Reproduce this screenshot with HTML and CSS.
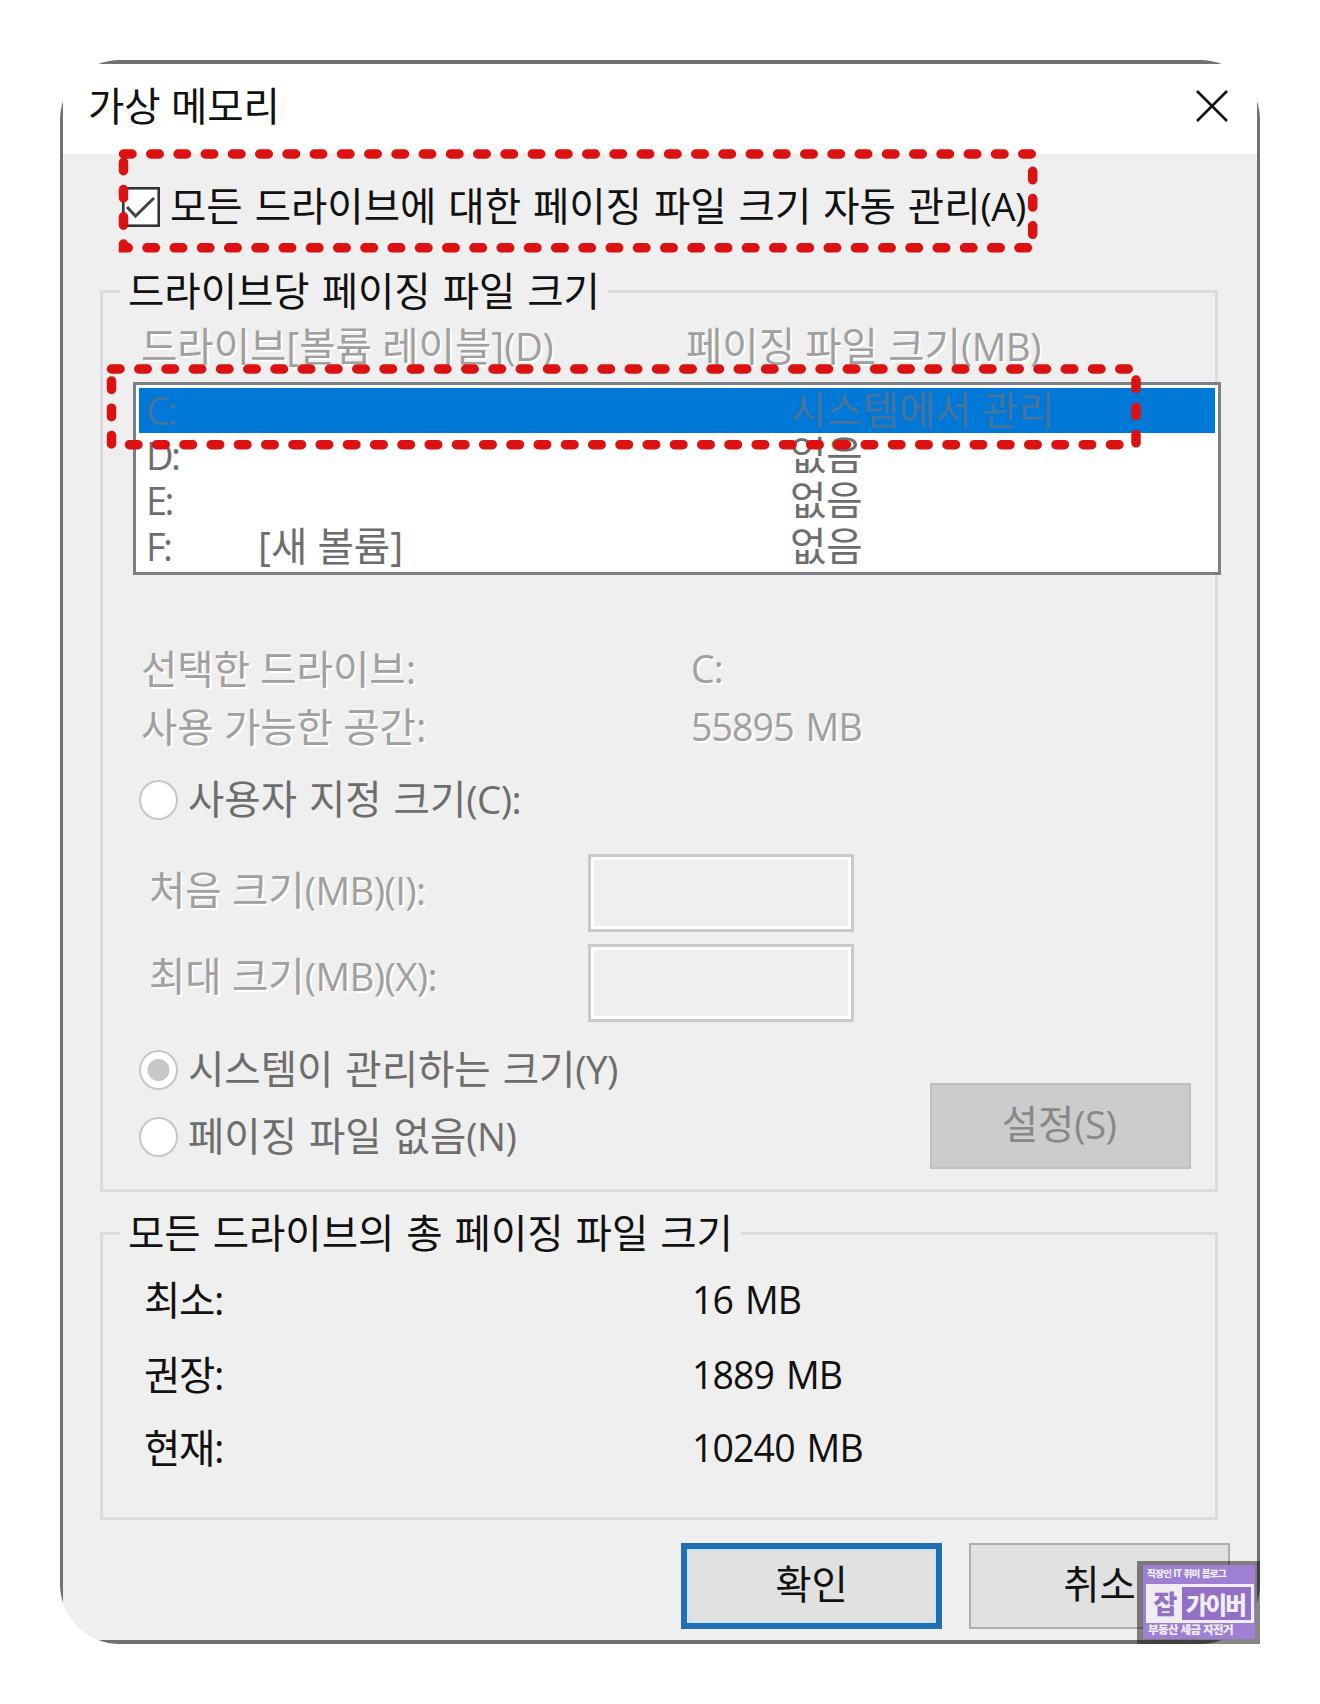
FILE: index.html
```html
<!DOCTYPE html>
<html lang="ko">
<head>
<meta charset="utf-8">
<title>가상 메모리</title>
<link rel="stylesheet" href="styles.css">
</head>
<body>
<div class="stage">
  <div class="clip">
    <section class="dialog">
      <header class="titlebar">
        <h1 class="title">가상 메모리</h1>
        <svg class="close" width="34" height="34" viewBox="0 0 34 34"><path d="M2 2 32 32M32 2 2 32" stroke="#111" stroke-width="2.6" fill="none"/></svg>
      </header>

      <label class="auto">
        <svg width="38" height="40" viewBox="0 0 38 40"><rect x="1.3" y="1.3" width="35.4" height="37.4" fill="#fff" stroke="#333" stroke-width="2.6"/><path d="M5 20 13.5 29 32 11" fill="none" stroke="#444" stroke-width="3"/></svg>
        <span class="text">모든 드라이브에 대한 페이징 파일 크기 자동 관리<span class="lat">(A)</span></span>
      </label>

      <div class="group drives">
        <div class="legend">드라이브당 페이징 파일 크기</div>
        <div class="cols head off"><span>드라이브[볼륨 레이블]<span class="lat">(D)</span></span><span>페이징 파일 크기<span class="lat">(MB)</span></span></div>
        <div class="list">
          <div class="item selected"><span class="drive">C:</span><span></span><span>시스템에서 관리</span></div>
          <div class="item"><span class="drive">D:</span><span></span><span>없음</span></div>
          <div class="item"><span class="drive">E:</span><span></span><span>없음</span></div>
          <div class="item"><span class="drive">F:</span><span>[새 볼륨]</span><span>없음</span></div>
        </div>
        <div class="cols chosen off"><span>선택한 드라이브:</span><span class="val">C:</span></div>
        <div class="cols space off"><span>사용 가능한 공간:</span><span class="val">55895 MB</span></div>
        <div class="radio custom"><i class="dot"></i><span class="text">사용자 지정 크기<span class="lat">(C):</span></span></div>
        <div class="field first off"><span>처음 크기<span class="lat">(MB)(I):</span></span><div class="input"></div></div>
        <div class="field second off"><span>최대 크기<span class="lat">(MB)(X):</span></span><div class="input"></div></div>
        <div class="bottom">
          <div class="radios">
            <div class="radio"><i class="dot on"></i><span class="text">시스템이 관리하는 크기<span class="lat">(Y)</span></span></div>
            <div class="radio"><i class="dot"></i><span class="text">페이징 파일 없음<span class="lat">(N)</span></span></div>
          </div>
          <div class="btn disabled">설정<span class="lat">(S)</span></div>
        </div>
      </div>

      <div class="group totals">
        <div class="legend">모든 드라이브의 총 페이징 파일 크기</div>
        <div class="cols min"><span class="name">최소:</span><span class="val">16 MB</span></div>
        <div class="cols rec"><span class="name">권장:</span><span class="val">1889 MB</span></div>
        <div class="cols cur"><span class="name">현재:</span><span class="val">10240 MB</span></div>
      </div>

      <footer class="actions">
        <div class="btn primary">확인</div>
        <div class="btn">취소</div>
      </footer>
    </section>
  </div>

  <svg class="marks" width="1200" height="1584" viewBox="60 60 1200 1584">
    <path d="M123.5 154H1032.7V247.8H123.5Z"/>
    <path d="M111.5 369H1136V444.7H111.5Z"/>
  </svg>

  <aside class="badge">
    <div class="badge-in">
      <div class="b-top">직장인 IT 취미 블로그</div>
      <div class="b-mid"><b>잡</b><span><em>가이버</em></span></div>
      <div class="b-bot">부동산 세금 자전거</div>
    </div>
  </aside>
</div>
</body>
</html>
```
FILE: styles.css
```css
* { box-sizing: border-box; }
body {
  margin: 0;
  background: #fff;
  color: #111;
  font: 39.5px/38px "Open Sans", "Noto Sans CJK KR", sans-serif;
  white-space: nowrap;
}
.stage { position: relative; width: 1200px; height: 1584px; margin: 60px; }
.clip { height: 1584px; border-radius: 60px; overflow: hidden; }
.dialog {
  height: 1584px;
  background: #efefef;
  border: 3px solid #717171;
  border-top-width: 4px;
  border-bottom-width: 4px;
}
.titlebar {
  display: flex;
  justify-content: space-between;
  height: 90px;
  padding: 23px 28px 0 25px;
  background: #fff;
}
.title { margin: 0; font: inherit; }
.close { margin-top: 2px; }
.auto { display: flex; height: 40px; margin: 33px 0 0 59px; gap: 10px; }
.text, .legend { word-spacing: 1.7px; }
.lat { font-size: 38.5px; letter-spacing: -.6px; }
.drive { font-size: 38px; letter-spacing: -2.6px; }
.val { font-size: 37.5px; letter-spacing: -.9px; word-spacing: 3px; }
.name { letter-spacing: -1.4px; }
.off { color: #a0a0a0; text-shadow: 2px 2px 0 #fff; }

.group { width: 1118px; margin-left: 37px; border: 3px solid #dcdcdc; }
.legend {
  width: max-content;
  height: 40px;
  margin: -21px 0 0 17px;
  padding: 0 8px;
  background: #efefef;
}
.drives { height: 902px; margin-top: 63px; }
.cols { display: grid; grid-template-columns: 550px auto; height: 40px; padding-left: 38px; }
.head { grid-template-columns: 545px auto; margin-top: 15px; }
.list {
  width: 1088px;
  height: 193px;
  margin: 15px 0 0 30px;
  padding: 3px;
  background: #fff;
  border: 3px solid #7c7f86;
  color: #6d6d6d;
}
.item {
  display: grid;
  grid-template-columns: 112px 532px auto;
  height: 45.2px;
  padding: 3px 0 0 7px;
}
.selected { background: #0078d7; color: #47749d; }
.chosen { margin-top: 75px; }
.space { margin-top: 18px; }
.radio { display: flex; gap: 10px; height: 40px; color: #6d6d6d; }
.custom { margin: 32px 0 0 36px; }
.dot { width: 39px; height: 40px; border: 2.5px solid #c6c6c6; border-radius: 50%; background: #fff; }
.on { background: radial-gradient(circle closest-side, #c8c8c8 0 10.5px, #fff 11.5px); }
.field { display: grid; grid-template-columns: 439px 266px; height: 78px; padding-left: 46px; }
.first { margin-top: 34px; }
.first > span { padding-top: 17px; }
.second { margin-top: 12px; }
.second > span { padding-top: 13px; }
.input { border: 3px solid #cacaca; box-shadow: inset 0 0 0 3px #fff; }
.bottom { display: flex; justify-content: space-between; margin: 28px 24px 0 36px; }
.radios { display: grid; gap: 27px; align-content: start; }
.btn {
  width: 261px;
  height: 86px;
  padding-top: 20px;
  border: 2.5px solid #adadad;
  background: #e1e1e1;
  text-align: center;
}
.disabled { margin-top: 33px; padding-right: 3px; background: #ccc; border-color: #bfbfbf; color: #888; }

.totals { height: 288px; margin-top: 40px; }
.totals .cols { padding-left: 41px; grid-template-columns: 548px auto; }
.min { margin-top: 27px; }
.rec { margin-top: 35px; }
.cur { margin-top: 33px; }

.actions { display: flex; justify-content: flex-end; gap: 27px; margin: 23px 27px 0 0; }
.primary { border: 6px solid #1f6fb1; padding-top: 16px; box-shadow: inset 0 0 0 2px #c4e4f8; }

.marks { position: absolute; left: 0; top: 0; fill: none; stroke: #dc1111; stroke-width: 9.5; stroke-linecap: round; stroke-dasharray: 8.5 18.75; }

.badge {
  position: absolute;
  right: 0;
  bottom: 0;
  width: 123px;
  height: 83px;
  padding: 4px 5px 5px 6px;
  background: rgba(16, 16, 16, .5);
  color: #f0eef4;
  font-weight: 900;
  font-family: "Noto Sans CJK KR", sans-serif;
}
.badge-in { height: 74px; background: rgba(161, 128, 216, .95); padding: 2px 1px 0 3px; }
.b-top { height: 17px; padding-left: 1px; font-size: 9.6px; line-height: 12px; letter-spacing: -.7px; }
.b-mid { display: flex; height: 39px; padding: 3px; background: #efedf2; }
.b-mid b { width: 33px; color: #9270c6; font-size: 26px; line-height: 31px; text-align: center; font-weight: 900; }
.b-mid span { flex: 1; background: #9270c6; }
.b-mid em { display: block; padding-left: 4px; font-style: normal; font-size: 23.5px; line-height: 35px; letter-spacing: -2px; }
.b-bot { padding-left: 2px; font-size: 11.5px; line-height: 13px; letter-spacing: -.6px; }
```
